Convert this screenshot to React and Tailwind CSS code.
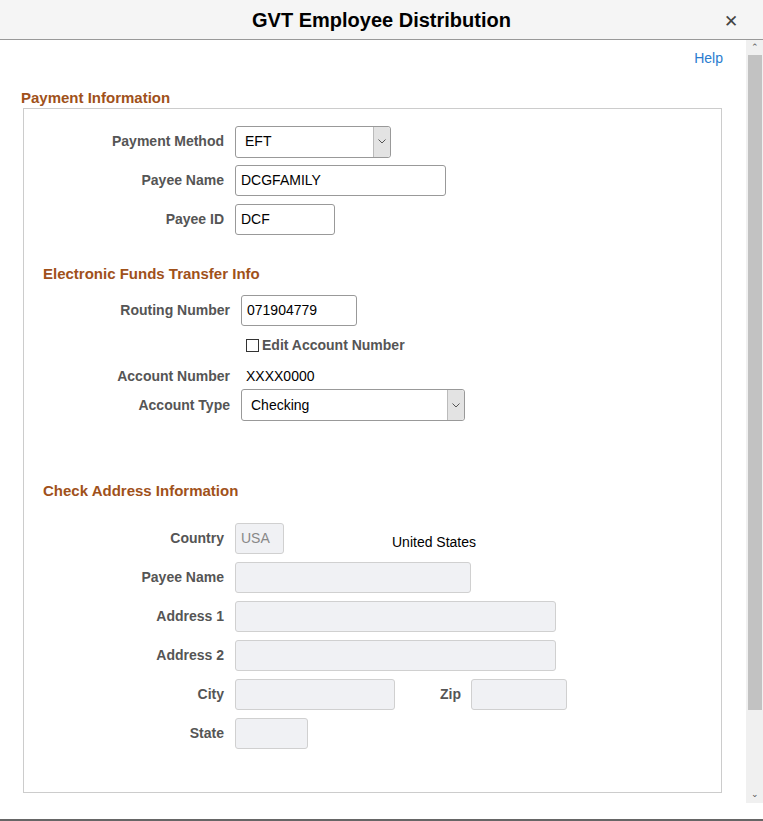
import React from 'react';

const F = { fontFamily: '"Liberation Sans", Arial, sans-serif' };

function Label({ w, children, className = '' }) {
  return (
    <div className={`shrink-0 text-right font-bold text-[14px] text-[#555] ${className}`} style={{ width: w }}>
      {children}
    </div>
  );
}

function Select({ value, w }) {
  return (
    <div className="flex h-[32px] border border-[#999] rounded-[3px] bg-white" style={{ width: w }}>
      <div className="flex-1 px-[9px] flex items-center text-[14px] text-black">{value}</div>
      <div className="w-[17px] bg-[#e3e3e3] border-l border-[#bbb] flex items-center justify-center rounded-r-[3px]">
        <svg width="8" height="5" viewBox="0 0 8 5"><path d="M0.5 0.5 L4 4 L7.5 0.5" fill="none" stroke="#555" strokeWidth="1" /></svg>
      </div>
    </div>
  );
}

function Input({ value, w, disabled }) {
  return (
    <div
      className={`h-[31px] rounded-[3px] border flex items-center px-[5px] text-[14px] ${disabled ? 'bg-[#f0f1f4] border-[#d0d0d0] text-[#888]' : 'bg-white border-[#999] text-black'}`}
      style={{ width: w }}
    >
      {value}
    </div>
  );
}

function Row({ label, lw, gap, h = 39, children }) {
  return (
    <div className="flex items-center" style={{ height: h }}>
      <Label w={lw}>{label}</Label>
      <div className="flex items-center" style={{ marginLeft: gap }}>{children}</div>
    </div>
  );
}

export default function App() {
  return (
    <div style={F} className="w-[763px] h-[821px] bg-white flex flex-col overflow-hidden">
      <div className="h-[40px] shrink-0 bg-[#f5f5f5] border-b border-[#999] flex items-center relative">
        <div className="flex-1 text-center text-[20px] font-bold text-black">GVT Employee Distribution</div>
        <div className="absolute right-[25px] top-[9px] text-[17px] text-[#444]">✕</div>
      </div>
      <div className="flex flex-1 min-h-0">
        <div className="flex-1 flex flex-col">
          <div className="flex justify-end pr-[23px] pt-[8px] h-[40px] text-[14px] text-[#2a7ccf]">Help</div>
          <div className="pl-[21px] text-[15px] font-bold text-[#a0511a] h-[28px] pt-[10px] leading-[15px]">Payment Information</div>
          <div className="ml-[23px] mr-[24px] h-[685px] border border-[#ccc] pt-[13px]">
            <Row label="Payment Method" lw={200} gap={11}><Select value="EFT" w={156} /></Row>
            <Row label="Payee Name" lw={200} gap={11}><Input value="DCGFAMILY" w={211} /></Row>
            <Row label="Payee ID" lw={200} gap={11}><Input value="DCF" w={100} /></Row>
            <div className="pl-[19px] pt-[24px] h-[55px] text-[15px] font-bold text-[#a0511a]">Electronic Funds Transfer Info</div>
            <Row label="Routing Number" lw={206} gap={11} h={32}><Input value="071904779" w={116} /></Row>
            <div className="flex items-center h-[38px] pl-[222px] text-[14px] font-bold text-[#555]">
              <span className="w-[13px] h-[13px] border border-[#333] mr-[3px] inline-block" />Edit Account Number
            </div>
            <div className="flex items-center h-[24px]">
              <Label w={206}>Account Number</Label>
              <span className="ml-[16px] text-[14px] text-black">XXXX0000</span>
            </div>
            <Row label="Account Type" lw={206} gap={11} h={34}><Select value="Checking" w={224} /></Row>
            <div className="pl-[19px] pt-[58px] h-[97px] text-[15px] font-bold text-[#a0511a]">Check Address Information</div>
            <Row label="Country" lw={200} gap={11}>
              <Input value="USA" w={49} disabled />
              <span className="ml-[108px] mt-[8px] text-[14px] text-black">United States</span>
            </Row>
            <Row label="Payee Name" lw={200} gap={11}><Input w={236} disabled /></Row>
            <Row label="Address 1" lw={200} gap={11}><Input w={321} disabled /></Row>
            <Row label="Address 2" lw={200} gap={11}><Input w={321} disabled /></Row>
            <Row label="City" lw={200} gap={11}>
              <Input w={160} disabled />
              <Label w={66}>Zip</Label>
              <div className="ml-[10px]"><Input w={96} disabled /></div>
            </Row>
            <Row label="State" lw={200} gap={11}><Input w={73} disabled /></Row>
          </div>
        </div>
        <div className="w-[17px] shrink-0 bg-[#f0f0f0] flex flex-col items-center">
          <div className="h-[15px] text-[9px] text-[#555] leading-[15px]">⌃</div>
          <div className="w-[14px] h-[655px] bg-[#c2c2c2]" />
          <div className="flex-1" />
          <div className="h-[15px] text-[9px] text-[#555]">⌄</div>
        </div>
      </div>
      <div className="h-[18px] shrink-0 bg-white border-b-2 border-[#666]" />
    </div>
  );
}
